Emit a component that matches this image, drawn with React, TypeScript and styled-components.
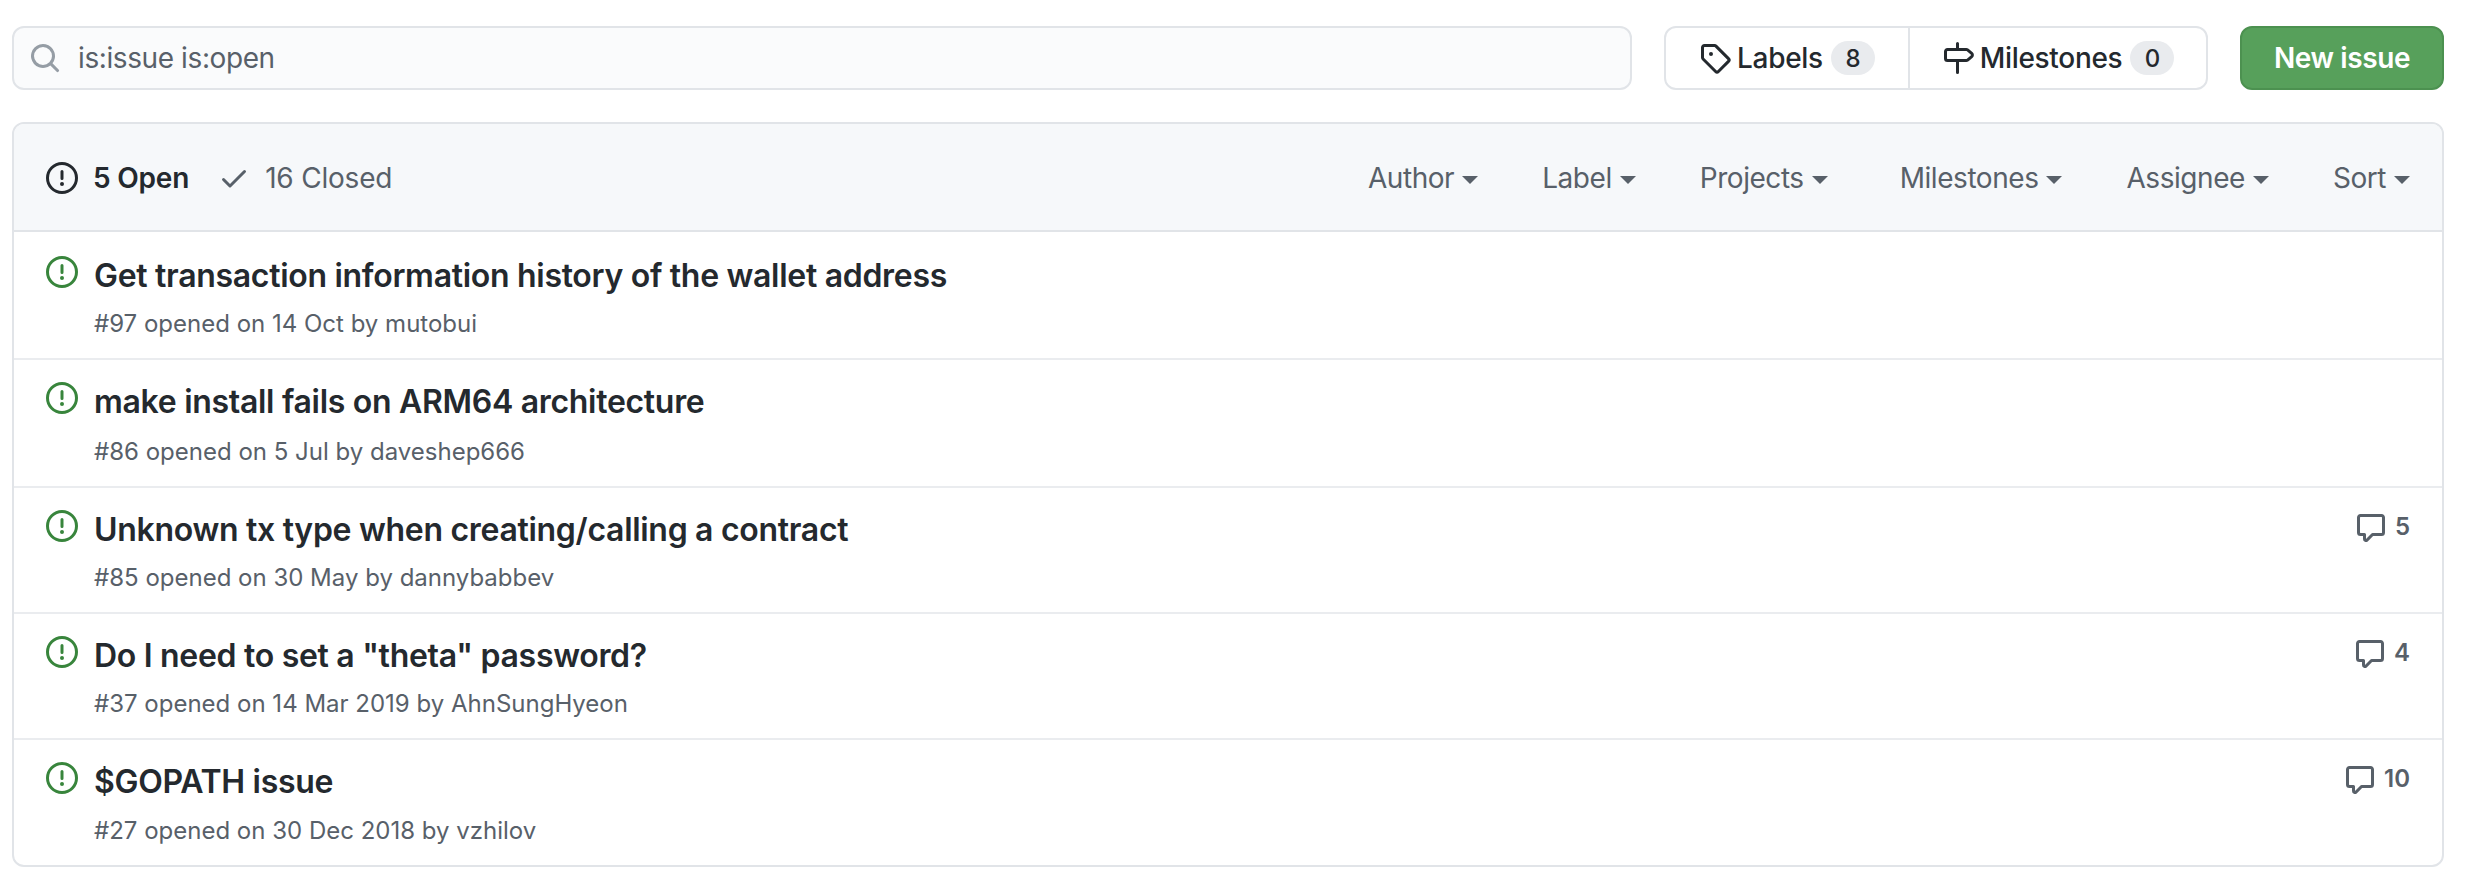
import React from "react";
import styled, { createGlobalStyle } from "styled-components";

const GlobalStyle = createGlobalStyle`
  html, body {
    margin: 0;
    padding: 0;
    background: #fff;
    font-family: Inter, "Liberation Sans", sans-serif;
    color: #24292e;
  }
`;

const ICONS = {
  issue:
    "M8 1.5a6.5 6.5 0 100 13 6.5 6.5 0 000-13zM0 8a8 8 0 1116 0A8 8 0 010 8zm9 3a1 1 0 11-2 0 1 1 0 012 0zm-.25-6.25a.75.75 0 00-1.5 0v3.5a.75.75 0 001.5 0v-3.5z",
  check:
    "M13.78 4.22a.75.75 0 010 1.06l-7.25 7.25a.75.75 0 01-1.06 0L2.22 9.28a.75.75 0 011.06-1.06L6 10.94l6.72-6.72a.75.75 0 011.06 0z",
  tag: "M2.5 7.775V2.75a.25.25 0 01.25-.25h5.025a.25.25 0 01.177.073l6.25 6.25a.25.25 0 010 .354l-5.025 5.025a.25.25 0 01-.354 0l-6.25-6.25a.25.25 0 01-.073-.177zm-1.5 0V2.75C1 1.784 1.784 1 2.75 1h5.025c.464 0 .91.184 1.238.513l6.25 6.25a1.75 1.75 0 010 2.474l-5.026 5.026a1.75 1.75 0 01-2.474 0l-6.25-6.25A1.75 1.75 0 011 7.775zM6 5a1 1 0 100 2 1 1 0 000-2z",
  milestone:
    "M7.75 0a.75.75 0 01.75.75V3h3.634c.414 0 .814.147 1.13.414l2.07 1.75a1.75 1.75 0 010 2.672l-2.07 1.75a1.75 1.75 0 01-1.13.414H8.5v5.25a.75.75 0 11-1.5 0V10H2.75A1.75 1.75 0 011 8.25v-3.5C1 3.784 1.784 3 2.75 3H7V.75A.75.75 0 017.75 0zm0 8.5h4.384a.25.25 0 00.161-.06l2.07-1.75a.25.25 0 000-.38l-2.07-1.75a.25.25 0 00-.161-.06H2.75a.25.25 0 00-.25.25v3.5c0 .138.112.25.25.25h5z",
  comment:
    "M2.75 2.5a.25.25 0 00-.25.25v7.5c0 .138.112.25.25.25h2a.75.75 0 01.75.75v2.19l2.72-2.72a.75.75 0 01.53-.22h4.5a.25.25 0 00.25-.25v-7.5a.25.25 0 00-.25-.25H2.75zM1 2.75C1 1.784 1.784 1 2.75 1h10.5c.966 0 1.75.784 1.75 1.75v7.5A1.75 1.75 0 0113.25 12H9.06l-2.573 2.573A1.457 1.457 0 014 13.543V12H2.75A1.75 1.75 0 011 10.25v-7.5z",
  search:
    "M11.5 7a4.499 4.499 0 11-8.998 0A4.499 4.499 0 0111.5 7zm-.82 4.74a6 6 0 111.06-1.06l3.04 3.04a.75.75 0 11-1.06 1.06l-3.04-3.04z",
};

const Octicon = ({ name, size, color }: { name: keyof typeof ICONS; size: number; color: string }) => (
  <svg width={size} height={size} viewBox="0 0 16 16" fill={color} style={{ flexShrink: 0, display: "block" }}>
    <path fillRule="evenodd" d={ICONS[name]} />
  </svg>
);

const Page = styled.div`
  width: 2468px;
  height: 882px;
  padding: 26px 24px 0 12px;
  box-sizing: border-box;
`;

const TopBar = styled.div`
  display: flex;
  align-items: stretch;
  height: 64px;
`;

const SearchBox = styled.div`
  flex: 1;
  display: flex;
  align-items: center;
  gap: 17px;
  padding: 0 0 0 15px;
  background: #fafbfc;
  border: 2px solid #e1e4e8;
  border-radius: 12px;
  font-size: 28px;
  letter-spacing: -0.4px;
  color: #586069;
`;

const TabGroup = styled.div`
  display: flex;
  margin-left: 32px;
  border: 2px solid #e1e4e8;
  border-radius: 12px;
`;

const Tab = styled.div<{ $width: number; $divided?: boolean }>`
  display: flex;
  align-items: center;
  justify-content: center;
  gap: 6px;
  width: ${(p) => p.$width}px;
  box-sizing: border-box;
  border-left: ${(p) => (p.$divided ? "2px solid #e1e4e8" : "none")};
  font-size: 28px;
  font-weight: 500;
  letter-spacing: -0.3px;
`;

const Counter = styled.span`
  min-width: 44px;
  height: 34px;
  padding: 0 12px;
  box-sizing: border-box;
  display: flex;
  align-items: center;
  justify-content: center;
  margin-left: 2px;
  background: #e9ebee;
  border-radius: 17px;
  font-size: 24px;
  font-weight: 500;
`;

const NewIssue = styled.div`
  width: 204px;
  margin-left: 32px;
  display: flex;
  align-items: center;
  justify-content: center;
  background: #57a05b;
  border: 2px solid #4c9150;
  border-radius: 12px;
  box-sizing: border-box;
  color: #fff;
  font-size: 28px;
  font-weight: 600;
  letter-spacing: -0.4px;
`;

const Panel = styled.div`
  margin-top: 32px;
  border: 2px solid #e1e4e8;
  border-radius: 12px;
`;

const PanelHeader = styled.div`
  height: 104px;
  display: flex;
  align-items: center;
  justify-content: space-between;
  padding: 2px 32px 0;
  background: #f6f8fa;
  border-bottom: 2px solid #e1e4e8;
  border-radius: 10px 10px 0 0;
`;

const States = styled.div`
  display: flex;
  align-items: center;
`;

const StateItem = styled.span<{ $active?: boolean }>`
  display: flex;
  align-items: center;
  gap: 15px;
  margin-right: 29px;
  font-size: 28px;
  font-weight: ${(p) => (p.$active ? 600 : 400)};
  letter-spacing: -0.2px;
  color: ${(p) => (p.$active ? "#24292e" : "#586069")};
`;

const Filters = styled.div`
  display: flex;
  align-items: center;
`;

const Filter = styled.span<{ $gap: number }>`
  display: flex;
  align-items: center;
  gap: 8px;
  margin-right: ${(p) => p.$gap}px;
  font-size: 28px;
  letter-spacing: -0.45px;
  color: #586069;
`;

const Caret = styled.span`
  width: 0;
  height: 0;
  margin-top: 3px;
  border-top: 8px solid #586069;
  border-left: 8px solid transparent;
  border-right: 8px solid transparent;
`;

const Row = styled.div<{ $height: number }>`
  height: ${(p) => p.$height}px;
  box-sizing: border-box;
  display: flex;
  padding: 22px 32px 0;
  border-top: 2px solid #eaecef;
  ${PanelHeader} + & {
    border-top: none;
    padding-top: 24px;
  }
`;

const RowBody = styled.div`
  flex: 1;
  margin-left: 16px;
`;

const Title = styled.div`
  margin-top: -2px;
  font-size: 32px;
  line-height: 44px;
  font-weight: 600;
  letter-spacing: -0.3px;
  color: #24292e;
`;

const Meta = styled.div<{ $gap: number }>`
  margin-top: ${(p) => p.$gap}px;
  font-size: 24px;
  line-height: 36px;
  color: #586069;
`;

const CommentCount = styled.div`
  display: flex;
  align-items: flex-start;
  gap: 8px;
  margin-top: 2px;
  font-size: 24px;
  line-height: 29px;
  font-weight: 600;
  color: #586069;
`;

const ISSUES = [
  { title: "Get transaction information history of the wallet address", meta: "#97 opened on 14 Oct by mutobui", height: 126, metaGap: 8 },
  { title: "make install fails on ARM64 architecture", meta: "#86 opened on 5 Jul by daveshep666", height: 128, metaGap: 10 },
  { title: "Unknown tx type when creating/calling a contract", meta: "#85 opened on 30 May by dannybabbev", comments: 5, height: 126, metaGap: 8 },
  { title: 'Do I need to set a "theta" password?', meta: "#37 opened on 14 Mar 2019 by AhnSungHyeon", comments: 4, height: 126, metaGap: 8 },
  { title: "$GOPATH issue", meta: "#27 opened on 30 Dec 2018 by vzhilov", comments: 10, height: 127, metaGap: 9 },
];

const FILTERS = [
  { name: "Author", gap: 64 },
  { name: "Label", gap: 64 },
  { name: "Projects", gap: 72 },
  { name: "Milestones", gap: 64 },
  { name: "Assignee", gap: 64 },
  { name: "Sort", gap: 0 },
];

export default function App() {
  return (
    <Page>
      <GlobalStyle />
      <TopBar>
        <SearchBox>
          <Octicon name="search" size={32} color="#959da5" />
          is:issue is:open
        </SearchBox>
        <TabGroup>
          <Tab $width={242}>
            <Octicon name="tag" size={32} color="#24292e" />
            Labels
            <Counter>8</Counter>
          </Tab>
          <Tab $width={298} $divided>
            <Octicon name="milestone" size={32} color="#24292e" />
            Milestones
            <Counter>0</Counter>
          </Tab>
        </TabGroup>
        <NewIssue>New issue</NewIssue>
      </TopBar>
      <Panel>
        <PanelHeader>
          <States>
            <StateItem $active>
              <Octicon name="issue" size={32} color="#24292e" />5 Open
            </StateItem>
            <StateItem>
              <Octicon name="check" size={32} color="#586069" />
              16 Closed
            </StateItem>
          </States>
          <Filters>
            {FILTERS.map((f) => (
              <Filter key={f.name} $gap={f.gap}>
                {f.name}
                <Caret />
              </Filter>
            ))}
          </Filters>
        </PanelHeader>
        {ISSUES.map((issue) => (
          <Row key={issue.meta} $height={issue.height}>
            <Octicon name="issue" size={32} color="#38853c" />
            <RowBody>
              <Title>{issue.title}</Title>
              <Meta $gap={issue.metaGap}>{issue.meta}</Meta>
            </RowBody>
            {issue.comments !== undefined && (
              <CommentCount>
                <Octicon name="comment" size={32} color="#586069" />
                {issue.comments}
              </CommentCount>
            )}
          </Row>
        ))}
      </Panel>
    </Page>
  );
}
